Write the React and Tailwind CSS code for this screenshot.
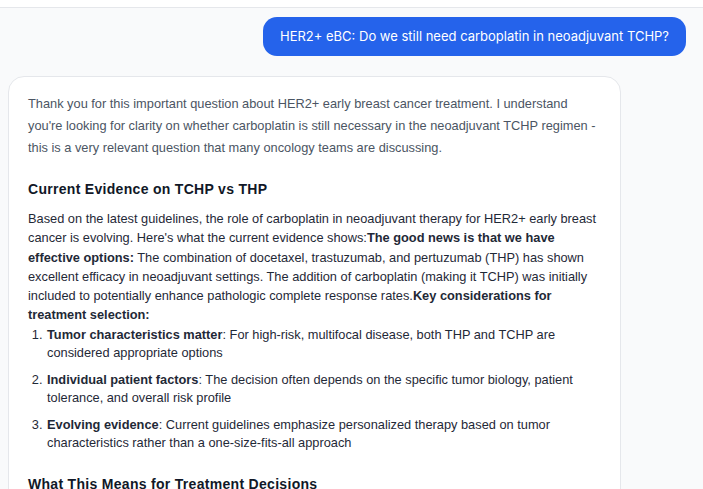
import React from 'react';

const UserBubble = ({ text }) => (
  <div className="flex justify-end pr-[17px] pt-[9px]">
    <div className="bg-[#2563eb] text-white rounded-[14px] px-[17px] py-[11px] text-[13px] leading-[17px] font-['Inter',sans-serif]">
      {text}
    </div>
  </div>
);

const ListItem = ({ title, children }) => (
  <li className="pl-px">
    <strong className="font-bold">{title}</strong>: {children}
  </li>
);

const AssistantCard = () => (
  <div className="ml-2 mt-5 w-[613px] bg-white border border-gray-200 rounded-2xl pl-[19px] pr-5 pt-4 pb-6 text-[12.8px] font-['Liberation_Sans',Arial,sans-serif]">
    <p className="text-[#4b5563] leading-[22px]">
      Thank you for this important question about HER2+ early breast cancer treatment. I understand
      you're looking for clarity on whether carboplatin is still necessary in the neoadjuvant TCHP regimen -
      this is a very relevant question that many oncology teams are discussing.
    </p>

    <h3 className="mt-5 text-[14px] font-bold tracking-[0.3px] text-[#111827] leading-5">
      Current Evidence on TCHP vs THP
    </h3>

    <p className="mt-[10px] text-[#1f2937] leading-[19.3px]">
      Based on the latest guidelines, the role of carboplatin in neoadjuvant therapy for HER2+ early breast
      cancer is evolving. Here's what the current evidence shows:
      <strong>The good news is that we have effective options:</strong> The combination of docetaxel,
      trastuzumab, and pertuzumab (THP) has shown excellent efficacy in neoadjuvant settings. The addition
      of carboplatin (making it TCHP) was initially included to potentially enhance pathologic complete
      response rates.<strong>Key considerations for treatment selection:</strong>
    </p>

    <ol className="list-decimal pl-[18px] text-[#1f2937] leading-[18px] flex flex-col gap-[9px] mt-px">
      <ListItem title="Tumor characteristics matter">
        For high-risk, multifocal disease, both THP and TCHP are considered appropriate options
      </ListItem>
      <ListItem title="Individual patient factors">
        The decision often depends on the specific tumor biology, patient tolerance, and overall risk profile
      </ListItem>
      <ListItem title="Evolving evidence">
        Current guidelines emphasize personalized therapy based on tumor characteristics rather than a
        one-size-fits-all approach
      </ListItem>
    </ol>

    <h3 className="mt-[22px] text-[14px] font-bold tracking-[0.3px] text-[#111827] leading-5">
      What This Means for Treatment Decisions
    </h3>
    <p className="mt-[10px] text-[#1f2937] leading-[19.3px]">
      The choice between THP and TCHP should be individualized based on the overall clinical picture.
    </p>
  </div>
);

export default function App() {
  return (
    <div className="h-[489px] overflow-hidden bg-[#f9fafb]">
      <div className="h-2 bg-white border-b border-gray-200" />
      <UserBubble text="HER2+ eBC: Do we still need carboplatin in neoadjuvant TCHP?" />
      <AssistantCard />
    </div>
  );
}
